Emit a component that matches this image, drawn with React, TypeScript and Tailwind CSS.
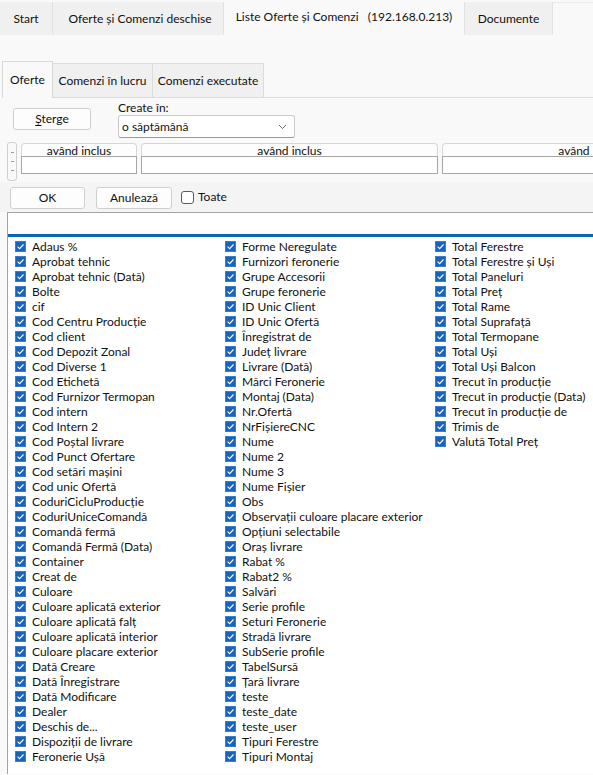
import React from "react";

const col1 = [
  "Adaus %",
  "Aprobat tehnic",
  "Aprobat tehnic (Dată)",
  "Bolte",
  "cif",
  "Cod Centru Producție",
  "Cod client",
  "Cod Depozit Zonal",
  "Cod Diverse 1",
  "Cod Etichetă",
  "Cod Furnizor Termopan",
  "Cod intern",
  "Cod Intern 2",
  "Cod Poștal livrare",
  "Cod Punct Ofertare",
  "Cod setări mașini",
  "Cod unic Ofertă",
  "CoduriCicluProducție",
  "CoduriUniceComandă",
  "Comandă fermă",
  "Comandă Fermă (Data)",
  "Container",
  "Creat de",
  "Culoare",
  "Culoare aplicată exterior",
  "Culoare aplicată falț",
  "Culoare aplicată interior",
  "Culoare placare exterior",
  "Dată Creare",
  "Dată Înregistrare",
  "Dată Modificare",
  "Dealer",
  "Deschis de...",
  "Dispoziții de livrare",
  "Feronerie Ușă",
];

const col2 = [
  "Forme Neregulate",
  "Furnizori feronerie",
  "Grupe Accesorii",
  "Grupe feronerie",
  "ID Unic Client",
  "ID Unic Ofertă",
  "Înregistrat de",
  "Județ livrare",
  "Livrare (Dată)",
  "Mărci Feronerie",
  "Montaj (Data)",
  "Nr.Ofertă",
  "NrFișiereCNC",
  "Nume",
  "Nume 2",
  "Nume 3",
  "Nume Fișier",
  "Obs",
  "Observații culoare placare exterior",
  "Opțiuni selectabile",
  "Oraș livrare",
  "Rabat %",
  "Rabat2 %",
  "Salvări",
  "Serie profile",
  "Seturi Feronerie",
  "Stradă livrare",
  "SubSerie profile",
  "TabelSursă",
  "Țară livrare",
  "teste",
  "teste_date",
  "teste_user",
  "Tipuri Ferestre",
  "Tipuri Montaj",
];

const col3 = [
  "Total Ferestre",
  "Total Ferestre și Uși",
  "Total Paneluri",
  "Total Preț",
  "Total Rame",
  "Total Suprafață",
  "Total Termopane",
  "Total Uși",
  "Total Uși Balcon",
  "Trecut în producție",
  "Trecut în producție (Data)",
  "Trecut în producție de",
  "Trimis de",
  "Valută Total Preț",
];

function CheckedBox() {
  return (
    <svg width="11" height="11" viewBox="0 0 11 11" className="shrink-0">
      <rect x="0" y="0" width="11" height="11" rx="1" fill="#1864bc" />
      <rect x="0.5" y="0.5" width="10" height="10" rx="1" fill="none" stroke="#3d7fcc" strokeWidth="1" />
      <path d="M2.6 5.7 L4.6 7.6 L8.5 3.5" stroke="#ffffff" strokeWidth="1.1" fill="none" />
    </svg>
  );
}

function Column({ items }: { items: string[] }) {
  return (
    <div className="flex flex-col">
      {items.map((t) => (
        <div key={t} className="flex h-[15px] items-center whitespace-nowrap">
          <CheckedBox />
          <span className="ml-[6px] leading-[15px]">{t}</span>
        </div>
      ))}
    </div>
  );
}

function FilterCell() {
  return (
    <div className="flex w-[297px] shrink-0 flex-col">
      <div className="h-[13px] rounded-t-[4px] border border-b-0 border-[#d6d6d6] bg-[#fdfdfd] text-center leading-[13px] text-[#111]">
        având inclus
      </div>
      <div className="h-[18px] border border-[#a6a6a6] bg-white" />
    </div>
  );
}

export default function App() {
  return (
    <div className="h-[775px] w-[593px] overflow-hidden bg-[#f9f9f9] font-['Lato',sans-serif] text-[12px] text-[#111]">
      {/* main tabs */}
      <div className="flex h-[35px] items-end">
        <div className="flex h-[33px] w-[53px] items-center justify-center border-r border-[#e2e2e2] bg-[#f0f0f0]">
          Start
        </div>
        <div className="flex h-[33px] w-[171px] items-center justify-center border-r border-[#e2e2e2] bg-[#f0f0f0] pl-[4px]">
          Oferte și Comenzi deschise
        </div>
        <div className="flex h-[35px] w-[240px] items-center justify-center bg-[#f9f9f9] pb-[1px]">
          Liste Oferte și Comenzi&nbsp;&nbsp;&nbsp;(192.168.0.213)
        </div>
        <div className="flex h-[33px] w-[89px] items-center justify-center border-x border-[#e2e2e2] bg-[#f0f0f0]">
          Documente
        </div>
        <div className="h-[33px] flex-1 border-t border-[#ececec]" />
      </div>

      {/* sub tabs */}
      <div className="mt-[26px] flex h-[37px] items-end pl-[2px]">
        <div className="flex h-[37px] w-[51px] items-center justify-center border border-b-0 border-[#d9d9d9] bg-[#f9f9f9] pb-[1px]">
          Oferte
        </div>
        <div className="flex h-[35px] w-[100px] items-center justify-center border-r border-t border-b border-[#dcdcdc] bg-[#f0f0f0]">
          Comenzi în lucru
        </div>
        <div className="flex h-[35px] w-[111px] items-center justify-center border-r border-t border-b border-[#dcdcdc] bg-[#f0f0f0]">
          Comenzi executate
        </div>
        <div className="h-[1px] flex-1 bg-[#dcdcdc]" />
      </div>

      {/* action row */}
      <div className="flex h-[40px] pl-[13px]">
        <button className="mt-[10px] h-[22px] w-[78px] rounded-[3px] border border-[#cfcfcf] bg-[#fdfdfd] leading-[20px]">
          <span className="underline decoration-1 underline-offset-2">Ș</span>terge
        </button>
        <div className="ml-[27px] flex flex-col">
          <div className="mt-[2px] h-[15px] leading-[15px]">Create în:</div>
          <div className="flex h-[23px] w-[177px] items-center justify-between rounded-[3px] border border-[#c9c9c9] border-b-[#9a9a9a] bg-white pl-[3px] pr-[7px]">
            <span>o săptămână</span>
            <svg width="9" height="6" viewBox="0 0 9 6">
              <path d="M1 1 L4.5 4.5 L8 1" stroke="#6a6a6a" strokeWidth="1" fill="none" />
            </svg>
          </div>
        </div>
      </div>

      {/* filter row */}
      <div className="mt-[4px] flex h-[39px] pl-[7px]">
        <div className="flex h-[39px] w-[10px] shrink-0 flex-col items-center gap-[8px] rounded-[3px] border border-[#cfcfcf] pt-[9px]">
          <div className="h-[1px] w-[3px] bg-[#9a9a9a]" />
          <div className="h-[1px] w-[3px] bg-[#9a9a9a]" />
          <div className="h-[1px] w-[3px] bg-[#9a9a9a]" />
        </div>
        <div className="ml-[4px] flex gap-[4px] overflow-hidden pt-[1px]">
          <div className="flex w-[116px] shrink-0 flex-col">
            <div className="h-[13px] rounded-t-[4px] border border-b-0 border-[#d6d6d6] bg-[#fdfdfd] text-center leading-[13px] text-[#111]">
              având inclus
            </div>
            <div className="h-[18px] border border-[#a6a6a6] bg-white" />
          </div>
          <FilterCell />
          <FilterCell />
        </div>
      </div>

      {/* confirm row */}
      <div className="mt-[1px] flex h-[30px] items-start gap-[11px] bg-[#f4f4f4] pl-[10px] pt-[5px]">
        <button className="h-[22px] w-[75px] rounded-[3px] border border-[#cfcfcf] bg-[#fdfdfd] leading-[20px]">
          OK
        </button>
        <button className="h-[22px] w-[76px] rounded-[3px] border border-[#cfcfcf] bg-[#fdfdfd] leading-[20px]">
          Anulează
        </button>
        <label className="-ml-[2px] flex h-[20px] items-center gap-[4px]">
          <span className="h-[13px] w-[13px] rounded-[3px] border border-[#5a5a5a] bg-white" />
          <span>Toate</span>
        </label>
      </div>

      {/* column list */}
      <div className="ml-[7px] h-[562px] border-l border-t border-[#a3a3a3] bg-white">
        <div className="h-[21px]" />
        <div className="h-[3px] bg-[#0a64bd]" />
        <div className="grid grid-cols-[210px_210px_1fr] pl-[7px] pt-[2px]">
          <Column items={col1} />
          <Column items={col2} />
          <Column items={col3} />
        </div>
      </div>
    </div>
  );
}
